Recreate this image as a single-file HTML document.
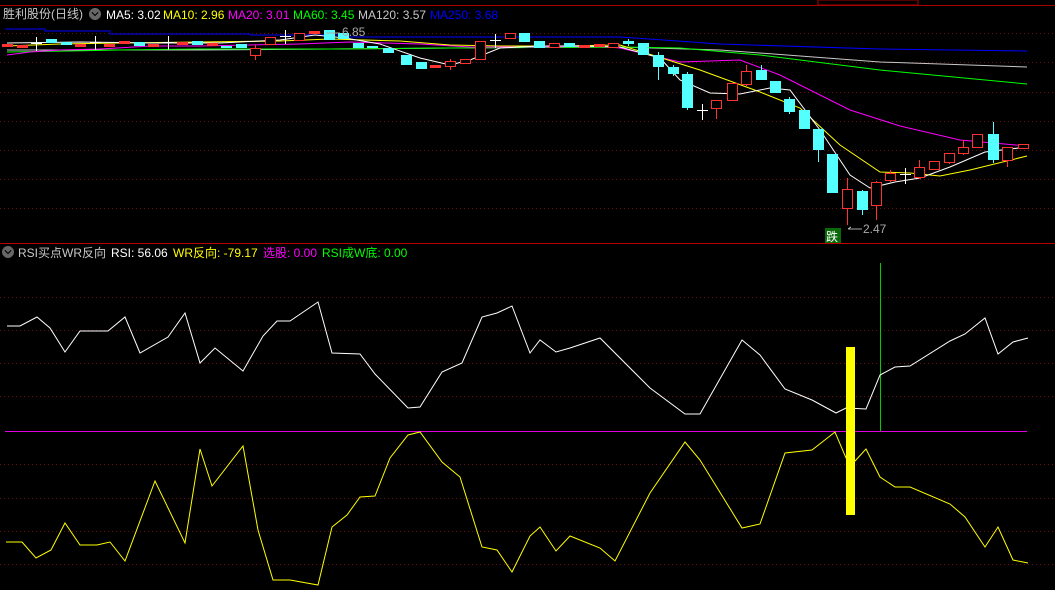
<!DOCTYPE html>
<html><head><meta charset="utf-8"><style>
html,body{margin:0;padding:0;background:#000;width:1055px;height:590px;overflow:hidden}
svg{display:block}
text{font-family:"Liberation Sans","Noto Sans CJK SC",sans-serif;font-size:12px}
</style></head><body>
<svg width="1055" height="590" viewBox="0 0 1055 590" xmlns="http://www.w3.org/2000/svg" shape-rendering="crispEdges">
<rect width="1055" height="590" fill="#000"/>
<line x1="0" y1="5.5" x2="1055" y2="5.5" stroke="#a00" />
<rect x="818" y="0" width="100" height="5" fill="none" stroke="#a00"/>
<g stroke="#6a1010" stroke-dasharray="1 3">
<line x1="0" y1="33.5" x2="1055" y2="33.5"/><line x1="0" y1="62.5" x2="1055" y2="62.5"/><line x1="0" y1="92.5" x2="1055" y2="92.5"/><line x1="0" y1="121.5" x2="1055" y2="121.5"/><line x1="0" y1="150.5" x2="1055" y2="150.5"/><line x1="0" y1="179.5" x2="1055" y2="179.5"/><line x1="0" y1="208.5" x2="1055" y2="208.5"/>
<line x1="0" y1="297.5" x2="1055" y2="297.5"/><line x1="0" y1="330.5" x2="1055" y2="330.5"/><line x1="0" y1="363.5" x2="1055" y2="363.5"/><line x1="0" y1="396.5" x2="1055" y2="396.5"/><line x1="0" y1="464.5" x2="1055" y2="464.5"/><line x1="0" y1="498.5" x2="1055" y2="498.5"/><line x1="0" y1="531.5" x2="1055" y2="531.5"/><line x1="0" y1="564.5" x2="1055" y2="564.5"/>
</g>
<line x1="0" y1="243.5" x2="1055" y2="243.5" stroke="#b00"/>
<text x="3" y="18" fill="#c8c8c8" font-size="13">胜利股份(日线)</text>
<circle cx="95" cy="14" r="6" fill="#666"/><path d="M92 12.5l3 3 3-3" stroke="#000" fill="none" stroke-width="1.4"/>
<text x="106" y="19" fill="#fff">MA5: 3.02</text>
<text x="163" y="19" fill="#ff0">MA10: 2.96</text>
<text x="228" y="19" fill="#f0f">MA20: 3.01</text>
<text x="293" y="19" fill="#0f0">MA60: 3.45</text>
<text x="358" y="19" fill="#c8c8c8">MA120: 3.57</text>
<text x="430" y="19" fill="#00f">MA250: 3.68</text>
<g fill="none" stroke-width="1" shape-rendering="auto">
<polyline stroke="#00f" points="5,29 45,29 45,31 110,31 110,34 250,34 250,35 340,35 340,37 620,37 720,44 880,49 1027,51"/>
<polyline stroke="#c8c8c8" points="7,50 120,50 200,50 330,49 450,48 620,47 720,50 880,62 1027,67"/>
<polyline stroke="#0f0" points="7,52 70,51 120,50 200,49 330,49 450,48 620,47 680,48 760,55 880,70 1027,84"/>
<polyline stroke="#f0f" points="7,55 30,52 60,50 100,49 150,46 200,46 300,44 350,42 420,44 470,47 540,47 600,46 620,48 680,62 740,60 780,75 850,110 900,126 960,140 1027,146"/>
<polyline stroke="#ff0" points="7,46 60,44 120,43 200,42 280,41 330,39 400,41 450,45 500,46 560,46 620,45 700,70 760,92 800,108 840,145 880,172 910,173 940,176 970,170 1027,156"/>
<polyline stroke="#fff" points="7,43 80,42 150,43 220,43 280,40 315,35 345,38 380,44 420,58 450,65 470,60 500,48 540,46 580,46 620,47 660,58 680,80 710,93 740,94 770,88 790,90 820,130 850,175 870,188 895,182 920,178 950,167 985,152 1027,147"/>
</g>
<g fill="#54ffff" stroke="none">
<rect x="46" y="39" width="11" height="4"/><rect x="61" y="42" width="11" height="3"/><rect x="134" y="42" width="11" height="4"/><rect x="192" y="41" width="11" height="4"/><rect x="221" y="46" width="11" height="2"/><rect x="236" y="44" width="11" height="4"/><rect x="324" y="30" width="11" height="10"/><rect x="338" y="33" width="11" height="6"/><rect x="353" y="43" width="11" height="5"/><rect x="367" y="46" width="11" height="2"/><rect x="383" y="48" width="11" height="5"/><rect x="401" y="55" width="11" height="10"/><rect x="416" y="62" width="11" height="7"/><rect x="519" y="33" width="11" height="9"/><rect x="534" y="41" width="11" height="7"/><rect x="564" y="43" width="11" height="4"/><rect x="623" y="41" width="11" height="3"/><rect x="638" y="43" width="11" height="12"/><rect x="653" y="55" width="11" height="12"/><rect x="668" y="67" width="11" height="7"/><rect x="682" y="74" width="11" height="34"/><rect x="756" y="70" width="11" height="10"/><rect x="770" y="81" width="11" height="12"/><rect x="784" y="99" width="11" height="13"/><rect x="799" y="110" width="11" height="19"/><rect x="813" y="129" width="11" height="21"/><rect x="827" y="154" width="11" height="39"/><rect x="857" y="191" width="11" height="19"/><rect x="988" y="134" width="11" height="26"/>
</g>
<g stroke="#54ffff">
<path d="M628.5 39v7M658.5 52v28M673.5 65v11M687.5 72v38M761.5 65v15M789.5 97v17M818.5 129v33M862.5 190v25M993.5 122v41"/>
</g>
<g fill="#ff3232">
<rect x="2" y="44" width="11" height="3"/><rect x="17" y="45" width="11" height="3"/><rect x="75" y="44" width="11" height="3"/><rect x="104" y="44" width="11" height="3"/><rect x="119" y="41" width="11" height="3"/><rect x="148" y="44" width="11" height="3"/><rect x="177" y="42" width="11" height="3"/><rect x="207" y="43" width="11" height="3"/><rect x="309" y="31" width="11" height="3"/><rect x="430" y="65" width="11" height="3"/><rect x="579" y="45" width="11" height="3"/><rect x="594" y="44" width="11" height="3"/>
</g>
<g stroke="#ff3232">
<path d="M255.5 45v15M450.5 59v11M716.5 100v19M746.5 65v21M847.5 178v47M876.5 181v39M890.5 170v12M919.5 160v19M949.5 153v11M963.5 140v15M1007.5 147v20"/>
</g>
<g fill="#000" stroke="#ff3232">
<rect x="250.5" y="48.5" width="10" height="7"/><rect x="265.5" y="37.5" width="10" height="7"/><rect x="294.5" y="33.5" width="10" height="7"/><rect x="445.5" y="61.5" width="10" height="5"/><rect x="460.5" y="59.5" width="10" height="4"/><rect x="475.5" y="41.5" width="10" height="18"/><rect x="505.5" y="33.5" width="10" height="5"/><rect x="549.5" y="43.5" width="10" height="4"/><rect x="608.5" y="43.5" width="10" height="4"/><rect x="711.5" y="100.5" width="10" height="8"/><rect x="727.5" y="83.5" width="10" height="17"/><rect x="741.5" y="71.5" width="10" height="13"/><rect x="842.5" y="189.5" width="10" height="19"/><rect x="871.5" y="182.5" width="10" height="23"/><rect x="885.5" y="173.5" width="10" height="7"/><rect x="914.5" y="167.5" width="10" height="10"/><rect x="929.5" y="161.5" width="10" height="8"/><rect x="944.5" y="153.5" width="10" height="9"/><rect x="958.5" y="147.5" width="10" height="6"/><rect x="972.5" y="134.5" width="10" height="13"/><rect x="1002.5" y="147.5" width="10" height="13"/><rect x="1018.5" y="144.5" width="10" height="4"/>
</g>
<g stroke="#fff">
<path d="M31 43.5h11M36.5 37v14M90 42.5h11M95.5 36v14M163 42.5h11M168.5 36v14M280 36.5h11M285.5 30v14M490 40.5h11M495.5 34v14M697 110.5h11M702.5 104v16M900 174.5h11M905.5 168v16"/>
</g>
<text x="342" y="36" fill="#aaa">6.85</text><path d="M326 33h14" stroke="#aaa"/>
<rect x="825" y="228" width="16" height="15" fill="#0a6a0a"/><text x="826" y="241" fill="#fff">跌</text>
<path d="M848 229h14M848 229l3-2" stroke="#aaa" fill="none"/><text x="863" y="233" fill="#aaa">2.47</text>
<circle cx="8" cy="252" r="6" fill="#666"/><path d="M5 250.5l3 3 3-3" stroke="#000" fill="none" stroke-width="1.4"/>
<text x="18" y="257" fill="#c8c8c8">RSI买点WR反向</text>
<text x="111" y="257" fill="#fff">RSI: 56.06</text>
<text x="173" y="257" fill="#ff0">WR反向: -79.17</text>
<text x="263" y="257" fill="#f0f">选股: 0.00</text>
<text x="322" y="257" fill="#0f0">RSI成W底: 0.00</text>
<line x1="5" y1="431.5" x2="1027" y2="431.5" stroke="#e000e0"/>
<line x1="880.5" y1="263" x2="880.5" y2="431" stroke="#0c0"/>
<g fill="none" shape-rendering="auto">
<polyline stroke="#fff" points="7,326 20,326 37,317 50,328 65,352 80,331 108,331 125,317 140,353 168,337 185,313 200,363 215,348 243,371 263,336 277,321 290,321 318,302 332,353 360,354 375,374 408,408 420,407 442,372 462,363 482,317 497,313 512,306 530,353 540,340 556,352 570,348 600,338 650,388 685,414 700,414 742,340 760,355 785,389 812,400 836,413 846,408 866,409 880,375 895,367 910,366 950,341 965,334 985,318 998,354 1013,342 1028,338"/>
<polyline stroke="#ff0" points="6,542 22,542 36,558 51,550 65,523 80,545 97,545 110,542 125,561 155,481 185,543 200,449 212,486 243,446 258,530 273,580 290,580 318,585 332,527 347,515 360,497 375,496 390,458 408,435 420,432 442,462 460,477 482,547 497,550 512,572 530,536 540,527 556,551 570,536 600,548 615,561 650,493 685,442 700,460 742,528 760,524 785,453 812,450 835,432 846,458 855,461 866,449 880,477 895,487 910,487 950,504 965,517 985,547 998,527 1013,560 1028,563"/>
</g>
<rect x="846" y="347" width="9" height="168" fill="#ff0"/>
</svg>
</body></html>
